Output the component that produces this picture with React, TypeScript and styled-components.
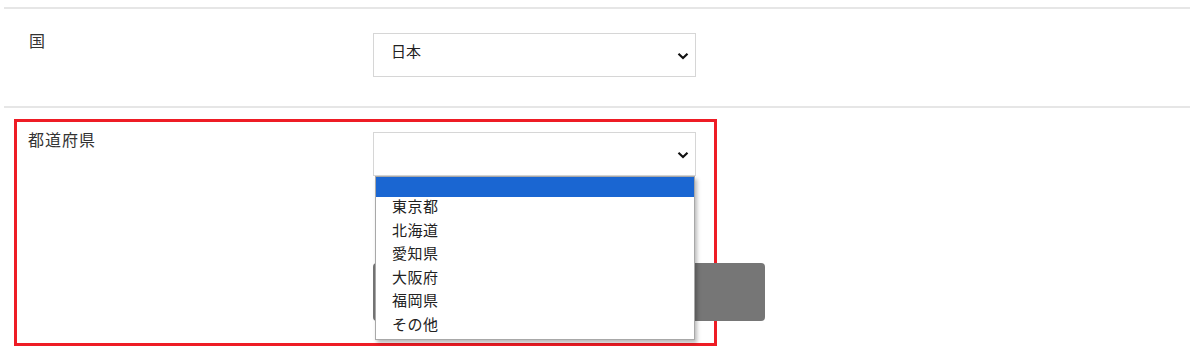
import React from 'react';
import styled, { createGlobalStyle } from 'styled-components';

const GlobalStyle = createGlobalStyle`
  body {
    margin: 0;
    background: #ffffff;
    font-family: 'Noto Sans CJK JP', 'Noto Sans', sans-serif;
    color: #333333;
  }
`;

const Page = styled.div`
  width: 1186px;
  padding: 7px 0 0 4px;
`;

const Divider = styled.div`
  height: 2px;
  background: #e6e6e6;
`;

const Row = styled.div`
  display: grid;
  grid-template-columns: 344px 323px;
  padding: 24px 0 29px 25px;
`;

// red annotation frame round the prefecture row
const Highlight = styled.div`
  box-sizing: border-box;
  width: 703px;
  height: 227px;
  margin: 11px 0 0 10px;
  border: 3px solid #ee1c25;
  display: grid;
  grid-template-columns: 345px 323px;
  padding: 10px 0 0 11px;
`;

const Label = styled.div`
  font-size: 16px;
  line-height: 20px;
  letter-spacing: 1px;
  margin-top: -3px;
`;

const Field = styled.div`
  position: relative;
  display: flex;
  flex-direction: column;
`;

const SelectBox = styled.div`
  box-sizing: border-box;
  height: 44px;
  border: 1px solid #d6d6d6;
  background: #fff;
  display: flex;
  align-items: flex-start;
  justify-content: space-between;
  padding: 6px 6px 0 17px;
  font-size: 15px;
  line-height: 22px;
  color: #222;
`;

const Chevron = styled.svg`
  width: 12px;
  height: 8px;
  margin-top: 12px;
  flex: none;
`;

const Submit = styled.div`
  width: 392px;
  height: 58px;
  margin-top: 87px;
  border-radius: 4px;
  background: #767676;
`;

const OptionList = styled.ul`
  position: absolute;
  top: 44px;
  left: 2px;
  box-sizing: border-box;
  width: 320px;
  margin: 0;
  padding: 0;
  list-style: none;
  background: #fff;
  border: 1px solid #a8a8a8;
  box-shadow: 2px 3px 4px rgba(0, 0, 0, 0.28);
`;

const Option = styled.li<{ $selected?: boolean }>`
  height: ${(p) => (p.$selected ? '20px' : '23.6px')};
  line-height: 18.6px;
  padding-left: 16px;
  font-size: 15px;
  letter-spacing: 0.5px;
  color: #222;
  background: ${(p) => (p.$selected ? '#1a66d2' : 'transparent')};
`;

const ChevronIcon = () => (
  <Chevron viewBox="0 0 12 8">
    <path d="M1.5 1.8 L6 6 L10.5 1.8" fill="none" stroke="#111" strokeWidth="2.2" />
  </Chevron>
);

const prefectures = ['東京都', '北海道', '愛知県', '大阪府', '福岡県', 'その他'];

export default function App() {
  return (
    <Page>
      <GlobalStyle />
      <Divider />
      <Row>
        <Label>国</Label>
        <Field>
          <SelectBox>
            <span>日本</span>
            <ChevronIcon />
          </SelectBox>
        </Field>
      </Row>
      <Divider />
      <Highlight>
        <Label>都道府県</Label>
        <Field>
          <SelectBox>
            <span></span>
            <ChevronIcon />
          </SelectBox>
          <Submit />
          <OptionList>
            <Option $selected />
            {prefectures.map((p) => (
              <Option key={p}>{p}</Option>
            ))}
          </OptionList>
        </Field>
      </Highlight>
    </Page>
  );
}
